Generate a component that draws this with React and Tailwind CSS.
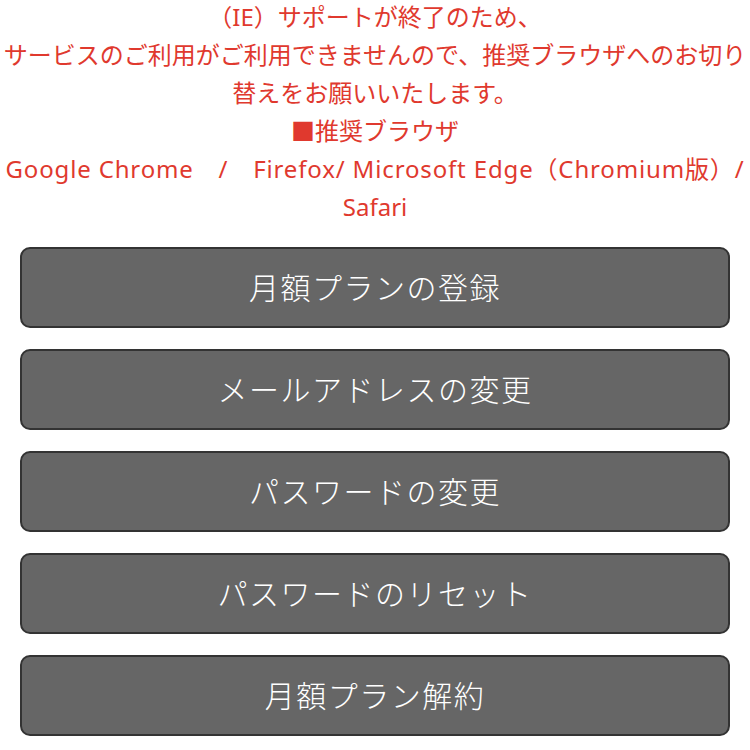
import React from 'react'

const menuItems = [
  '月額プランの登録',
  'メールアドレスの変更',
  'パスワードの変更',
  'パスワードのリセット',
  '月額プラン解約',
]

const App = () => {
  return (
    <div
      className="w-[750px] bg-white"
      style={{ fontFamily: '"Noto Sans", "Noto Sans CJK JP", sans-serif' }}
    >
      {/* IE notice */}
      <div className="-mt-[2px] text-center text-[24px] leading-[38px] text-[#e0392e]">
        <p>（IE）サポートが終了のため、</p>
        <p>
          サービスのご利用がご利用できませんので、推奨ブラウザへのお切り
          <br />
          替えをお願いいたします。
        </p>
        <p>■推奨ブラウザ</p>
        <p>
          <span className="tracking-[0.85px]">
            Google Chrome　/　Firefox/ Microsoft Edge（Chromium版）/
          </span>
          <br />
          Safari
        </p>
      </div>

      {/* Menu buttons */}
      <div className="mt-[21px] flex flex-col gap-[21px] px-[20px]">
        {menuItems.map((label) => (
          <button
            key={label}
            type="button"
            className="flex h-[81px] w-[710px] items-center justify-center rounded-[10px] border-2 border-[#333333] bg-[#666666] text-[30px] font-light tracking-[1.5px] text-white"
          >
            {label}
          </button>
        ))}
      </div>
    </div>
  )
}

export default App
